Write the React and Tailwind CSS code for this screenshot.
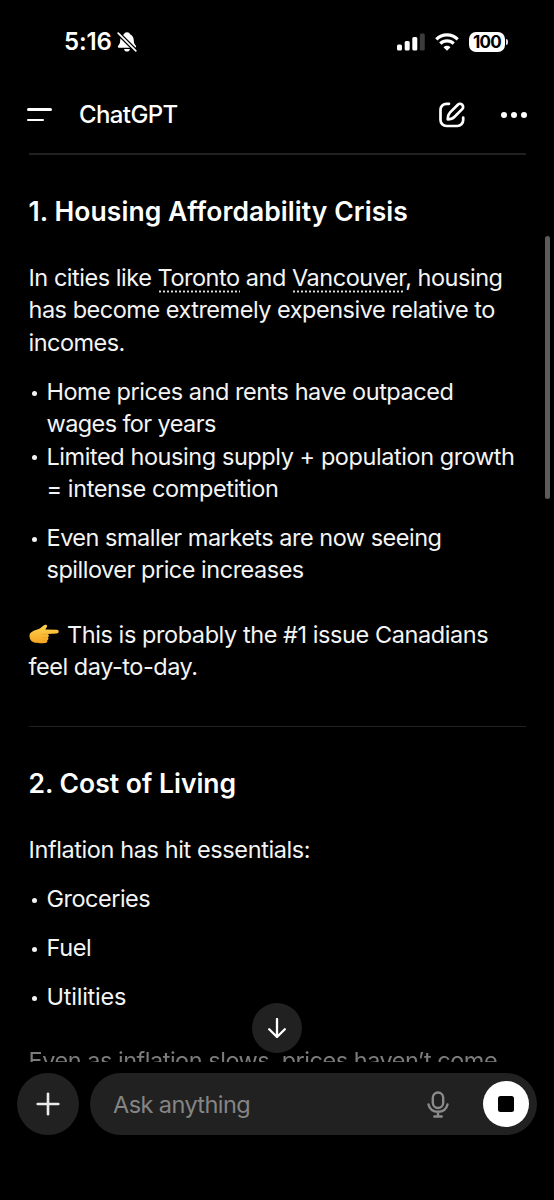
const Line = ({ children, className = "" }) => (
  <span className={`block whitespace-nowrap ${className}`}>{children}</span>
);

const Bullet = ({ children, className = "" }) => (
  <li className={`flex ${className}`}>
    <span className="flex h-[32.4px] w-[18px] shrink-0 items-center pt-[2px] pl-[3px]">
      <span className="size-[5px] rounded-full bg-[#f4f4f4]" />
    </span>
    <div>{children}</div>
  </li>
);

const Term = ({ children }) => (
  <span className="bg-[radial-gradient(circle,#dcdcdc_0.900px,transparent_1.300px)] bg-[length:4px_3px] bg-[position:0_100%] bg-repeat-x pb-[1px]">{children}</span>
);

function BellOff() {
  return (
    <svg className="ml-[5px] h-[22px] w-[20px]" viewBox="0 0 20 22">
      <path d="M10 1.200c1.700 0 2.700.9 3 2 2.600 1.200 3.700 3.400 3.800 6.300.1 2.600.7 3.600 1.900 4.900.9 1.100.4 2.400-1 2.400H2.300c-1.400 0-1.900-1.300-1-2.400 1.200-1.300 1.800-2.300 1.900-4.900.1-2.900 1.200-5.100 3.800-6.300.3-1.100 1.300-2 3-2zM7 18h6c-.3 1.600-1.500 2.600-3 2.600S7.300 19.600 7 18z" fill="#fff" />
      <path d="M1.200 2.200L18.800 19.800" stroke="#000" strokeWidth="4.400" />
      <path d="M1.200 2.200L18.800 19.800" stroke="#fff" strokeWidth="1.700" strokeLinecap="round" />
    </svg>
  );
}

function StatusBar() {
  return (
    <div className="flex h-[84px] shrink-0 items-start justify-between pt-[30px] pr-[46px] pl-[64px]">
      <div className="flex h-[23px] items-center">
        <span className="w-[48px] text-[24px] font-semibold tracking-[-0.100px]">5:16</span>
        <BellOff />
      </div>
      <div className="flex h-[23px] items-center">
        <svg className="h-[18px] w-[28px]" viewBox="0 0 28 18">
          <rect x="0" y="11.500" width="5" height="6" rx="1.500" fill="#fff" />
          <rect x="7.700" y="8" width="5" height="9.500" rx="1.500" fill="#fff" />
          <rect x="15.300" y="4" width="5" height="13.500" rx="1.500" fill="#fff" />
          <rect x="22.800" y="0.500" width="5" height="17" rx="1.500" fill="#3c3c3c" />
        </svg>
        <svg className="ml-[10px] h-[18px] w-[24px]" viewBox="0 0 24 18" fill="none" stroke="#fff" strokeWidth="3.200">
          <path d="M1.300 6.300a15.300 15.300 0 0 1 21.400 0" />
          <path d="M5.300 10.600a9.600 9.600 0 0 1 13.400 0" />
          <path d="M12 17.800l-3.500-3.600a5 5 0 0 1 7 0z" fill="#fff" stroke="none" />
        </svg>
        <span className="ml-[10px] flex h-[20px] w-[36px] items-center justify-center rounded-[7px] bg-white text-[17px] leading-[20px] font-bold tracking-[-0.700px] text-black">100</span>
        <span className="ml-[1px] h-[6px] w-[2px] rounded-r-full bg-[#ddd]" />
      </div>
    </div>
  );
}

function Header() {
  return (
    <header className="flex h-[62px] shrink-0 items-center pr-[27px] pl-[27px]">
      <div className="flex flex-col gap-[8px] pb-[1px]">
        <span className="h-[2.700px] w-[25px] rounded-full bg-white" />
        <span className="h-[2.700px] w-[17px] rounded-full bg-white" />
      </div>
      <span className="ml-[27px] text-[24px] leading-[32px] font-medium tracking-[-0.600px]">ChatGPT</span>
      <svg className="ml-auto h-[26px] w-[26px]" viewBox="0 0 26 26" fill="none" stroke="#fff" strokeWidth="2.700" strokeLinecap="round" strokeLinejoin="round">
        <path d="M10 1.800H7.500A6 6 0 0 0 1.500 7.800V18a6 6 0 0 0 6 6h10.700a6 6 0 0 0 6-6v-2.500" />
        <path d="M8.700 17.300c0-3 .5-4.900 2.200-6.700l7.900-7.900a3.050 3.050 0 0 1 4.400 4.400l-7.900 7.900c-1.700 1.700-3.600 2.300-6.600 2.300z" />
      </svg>
      <div className="ml-[36px] flex gap-[3.700px] pr-[0.500px] pb-[1px]">
        <span className="size-[6px] rounded-full bg-white" />
        <span className="size-[6px] rounded-full bg-white" />
        <span className="size-[6px] rounded-full bg-white" />
      </div>
    </header>
  );
}

function PointingHand() {
  return (
    <svg className="mr-[8.500px] inline-block h-[20px] w-[30px] align-[-1px]" viewBox="0 0 30 20">
      <defs>
        <linearGradient id="hand" x1="0" y1="0" x2="0" y2="1">
          <stop offset="0" stopColor="#ffd44f" />
          <stop offset="1" stopColor="#f5a623" />
        </linearGradient>
      </defs>
      <path d="M1 9.500C3 7 6 6.500 9 5.300c2.500-1 4.500-3 6.500-4.300 1.700-1 3.300.4 2.300 2.100L16.300 5.400l11.700.4c2.300.1 2.300 3.500 0 3.600l-9.300.5c1.600.8 1.500 2.700.2 3.300 1 1 .6 2.600-.7 3 .6 1.300-.2 2.600-1.800 2.700-5 .5-9.900.4-12.400-.9C.6 16.400-.2 12 1 9.500z" fill="url(#hand)" />
      <path d="M13 10.200c2 .6 3.800.2 5.500-.3M13.500 13.500c2 .3 3.600.1 5.200-.4M13.500 16.400c1.600.2 3.200 0 4.500-.4" fill="none" stroke="#dd9420" strokeWidth=".5" />
    </svg>
  );
}

function Message() {
  return (
    <main className="relative h-[916px] shrink-0 overflow-hidden pr-[28px] pl-[28.500px] text-[23.500px] leading-[32.400px] text-[#f4f4f4]">
      <hr className="mt-[7px] h-[1.500px] border-0 bg-[#202020]" />
      <h2 className="mt-[39px] text-[26.500px] leading-[34px] font-semibold text-white">
        <Line className="tracking-[0.060px]">1. Housing Affordability Crisis</Line>
      </h2>
      <p className="mt-[34.500px]">
        <Line className="tracking-[-0.470px]">In cities like <Term>Toronto</Term> and <Term>Vancouver</Term>, housing</Line>
        <Line className="tracking-[-0.490px]">has become extremely expensive relative to</Line>
        <Line className="tracking-[-0.540px]">incomes.</Line>
      </p>
      <ul className="mt-[16.600px]">
        <Bullet>
          <Line className="tracking-[-0.470px]">Home prices and rents have outpaced</Line>
          <Line className="tracking-[-0.600px]">wages for years</Line>
        </Bullet>
        <Bullet>
          <Line className="tracking-[-0.430px]">Limited housing supply + population growth</Line>
          <Line className="tracking-[-0.400px]">= intense competition</Line>
        </Bullet>
        <Bullet className="mt-[16.400px]">
          <Line className="tracking-[-0.500px]">Even smaller markets are now seeing</Line>
          <Line className="tracking-[-0.490px]">spillover price increases</Line>
        </Bullet>
      </ul>
      <p className="mt-[32.200px]">
        <Line className="h-[32.400px] tracking-[-0.430px]"><PointingHand />This is probably the #1 issue Canadians</Line>
        <Line className="tracking-[-0.470px]">feel day-to-day.</Line>
      </p>
      <hr className="mt-[42px] h-[1.500px] border-0 bg-[#202020]" />
      <h2 className="mt-[39px] text-[26.500px] leading-[34px] font-semibold text-white">
        <Line>2. Cost of Living</Line>
      </h2>
      <p className="mt-[33.700px]">
        <Line className="tracking-[-0.400px]">Inflation has hit essentials:</Line>
      </p>
      <ul className="mt-[16.700px] flex flex-col gap-[16.700px]">
        <Bullet><Line className="tracking-[-0.500px]">Groceries</Line></Bullet>
        <Bullet><Line className="tracking-[-0.400px]">Fuel</Line></Bullet>
        <Bullet><Line className="tracking-[-0.230px]">Utilities</Line></Bullet>
      </ul>
      <p className="mt-[31.200px] text-[#7c7c7c] blur-[0.700px]">
        <Line className="tracking-[-0.480px]">Even as inflation slows, prices haven’t come</Line>
      </p>
      <button aria-label="Scroll to bottom" className="absolute top-[857px] left-[252px] flex size-[50px] items-center justify-center rounded-full bg-[#212121]">
        <svg className="h-[20px] w-[18px]" viewBox="0 0 18 20" fill="none" stroke="#fff" strokeWidth="2.300" strokeLinecap="round" strokeLinejoin="round">
          <path d="M9 1v18M1.200 11.200L9 19l7.800-7.800" />
        </svg>
      </button>
      <span className="absolute top-[90px] right-[4px] h-[263px] w-[5px] rounded-full bg-[#5c5c5c]" />
    </main>
  );
}

function Composer() {
  return (
    <footer className="flex shrink-0 gap-[11px] pt-[11px] pr-[17px] pl-[17px]">
      <button aria-label="Add" className="flex size-[62px] shrink-0 items-center justify-center rounded-full bg-[#212121]">
        <svg className="size-[24px]" viewBox="0 0 24 24" stroke="#ececec" strokeWidth="2.600" strokeLinecap="round">
          <path d="M12 1.700v20.600M1.700 12h20.600" />
        </svg>
      </button>
      <div className="flex h-[62px] flex-1 items-center rounded-full bg-[#212121] pr-[8px] pl-[23px]">
        <span className="pt-[2px] text-[23.500px] leading-[32px] tracking-[-0.580px] text-[#858585]">Ask anything</span>
        <svg className="ml-auto h-[27px] w-[22px]" viewBox="0 0 22 27" fill="none" stroke="#8b8b8b" strokeWidth="2.400" strokeLinecap="round">
          <rect x="5.800" y="1.500" width="10.400" height="15.500" rx="5.200" />
          <path d="M1.500 13.500c1.100 4.500 4.900 7.300 9.500 7.300s8.400-2.800 9.500-7.300M11 20.800v4.500M7.300 25.500h7.400" />
        </svg>
        <button aria-label="Stop" className="ml-[34px] flex size-[46px] items-center justify-center rounded-full bg-white">
          <span className="size-[16px] rounded-[2.500px] bg-black" />
        </button>
      </div>
    </footer>
  );
}

export default function App() {
  return (
    <div className="flex h-[1200px] w-[554px] flex-col overflow-hidden bg-black font-['Inter',sans-serif] text-white">
      <StatusBar />
      <Header />
      <Message />
      <Composer />
    </div>
  );
}
